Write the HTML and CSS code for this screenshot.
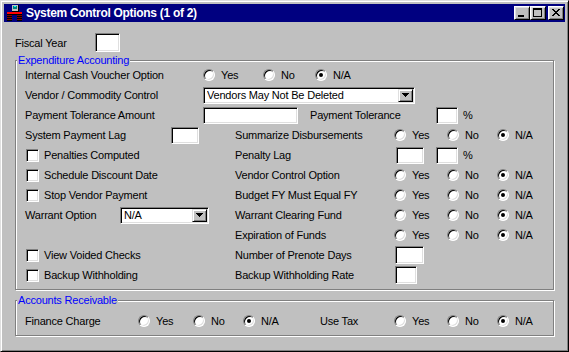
FILE: index.html
```html
<!DOCTYPE html>
<html>
<head>
<meta charset="utf-8">
<link rel="stylesheet" href="styles.css">
</head>
<body>
<div class="window">
  <div class="titlebar">
    <svg class="app-icon" width="16" height="16" viewBox="0 0 16 16">
      <rect x="6" y="0" width="7" height="7" fill="#000"/>
      <rect x="6" y="0" width="6" height="6" fill="#c0c0c0"/>
      <rect x="7" y="1" width="4" height="3" fill="#008080"/>
      <rect x="8" y="1" width="2" height="1" fill="#00ffff"/>
      <rect x="1" y="7" width="15" height="2" fill="#ff0000"/>
      <rect x="1" y="9" width="15" height="1" fill="#000"/>
      <rect x="1" y="10" width="5" height="6" fill="#800000"/>
      <rect x="1" y="11" width="5" height="1" fill="#000"/>
      <rect x="1" y="13" width="5" height="1" fill="#000"/>
      <rect x="1" y="15" width="5" height="1" fill="#000"/>
      <rect x="11" y="10" width="5" height="6" fill="#800000"/>
      <rect x="11" y="11" width="5" height="1" fill="#000"/>
      <rect x="11" y="13" width="5" height="1" fill="#000"/>
      <rect x="11" y="15" width="5" height="1" fill="#000"/>
    </svg>
    <span class="title">System Control Options (1 of 2)</span>
    <div class="tb-buttons">
      <span class="tb-btn"><svg width="14" height="12" viewBox="0 0 14 12"><rect x="3" y="8" width="6" height="2" fill="#000"/></svg></span>
      <span class="tb-btn"><svg width="14" height="12" viewBox="0 0 14 12"><path d="M2 1h9v2h-9z M2 1h1v9h-1z M10 1h1v9h-1z M2 9h9v1h-9z" fill="#000"/></svg></span>
      <span class="tb-btn close"><svg width="14" height="12" viewBox="0 0 14 12"><path d="M3 2h2v1h-2z M9 2h2v1h-2z M4 3h2v1h-2z M8 3h2v1h-2z M5 4h4v1h-4z M6 5h2v1h-2z M5 6h4v1h-4z M4 7h2v1h-2z M8 7h2v1h-2z M3 8h2v1h-2z M9 8h2v1h-2z" fill="#000"/></svg></span>
    </div>
  </div>

  <div class="content">
    <div class="row fiscal">
      <span class="lbl w80">Fiscal Year</span>
      <span class="field fy"></span>
    </div>

    <div class="group g1">
      <div class="gtitle">Expenditure Accounting</div>

      <div class="row">
        <span class="lbl w178">Internal Cash Voucher Option</span>
        <span class="opt w60"><span class="radio"></span>Yes</span>
        <span class="opt w52"><span class="radio"></span>No</span>
        <span class="opt"><span class="radio on"></span>N/A</span>
      </div>

      <div class="row">
        <span class="lbl w178">Vendor / Commodity Control</span>
        <span class="select vendor"><span class="sel-text">Vendors May Not Be Deleted</span><span class="dd-btn"><svg width="7" height="4" viewBox="0 0 7 4"><path d="M0 0h7v1h-1v1h-1v1h-1v1h-1v-1h-1v-1h-1v-1h-1z" fill="#000"/></svg></span></span>
      </div>

      <div class="row">
        <span class="lbl w178">Payment Tolerance Amount</span>
        <span class="field amount"></span>
        <span class="lbl tol">Payment Tolerance</span>
        <span class="field pct"></span>
        <span class="pctsign">%</span>
      </div>

      <div class="row">
        <div class="left">
          <span class="lbl w146">System Payment Lag</span>
          <span class="field lag"></span>
        </div>
        <span class="lbl w159">Summarize Disbursements</span>
        <span class="opt w53"><span class="radio"></span>Yes</span>
        <span class="opt w50"><span class="radio"></span>No</span>
        <span class="opt"><span class="radio on"></span>N/A</span>
      </div>

      <div class="row">
        <div class="left">
          <span class="cb"></span><span class="cb-lbl">Penalties Computed</span>
        </div>
        <span class="lbl w159">Penalty Lag</span>
        <span class="field plag"></span>
        <span class="field pct2"></span>
        <span class="pctsign">%</span>
      </div>

      <div class="row">
        <div class="left">
          <span class="cb"></span><span class="cb-lbl">Schedule Discount Date</span>
        </div>
        <span class="lbl w159">Vendor Control Option</span>
        <span class="opt w53"><span class="radio"></span>Yes</span>
        <span class="opt w50"><span class="radio"></span>No</span>
        <span class="opt"><span class="radio on"></span>N/A</span>
      </div>

      <div class="row">
        <div class="left">
          <span class="cb"></span><span class="cb-lbl">Stop Vendor Payment</span>
        </div>
        <span class="lbl w159">Budget FY Must Equal FY</span>
        <span class="opt w53"><span class="radio"></span>Yes</span>
        <span class="opt w50"><span class="radio"></span>No</span>
        <span class="opt"><span class="radio on"></span>N/A</span>
      </div>

      <div class="row">
        <div class="left">
          <span class="lbl w95">Warrant Option</span>
          <span class="select warrant"><span class="sel-text">N/A</span><span class="dd-btn"><svg width="7" height="4" viewBox="0 0 7 4"><path d="M0 0h7v1h-1v1h-1v1h-1v1h-1v-1h-1v-1h-1v-1h-1z" fill="#000"/></svg></span></span>
        </div>
        <span class="lbl w159">Warrant Clearing Fund</span>
        <span class="opt w53"><span class="radio"></span>Yes</span>
        <span class="opt w50"><span class="radio"></span>No</span>
        <span class="opt"><span class="radio on"></span>N/A</span>
      </div>

      <div class="row">
        <div class="left"></div>
        <span class="lbl w159">Expiration of Funds</span>
        <span class="opt w53"><span class="radio"></span>Yes</span>
        <span class="opt w50"><span class="radio"></span>No</span>
        <span class="opt"><span class="radio on"></span>N/A</span>
      </div>

      <div class="row">
        <div class="left">
          <span class="cb"></span><span class="cb-lbl">View Voided Checks</span>
        </div>
        <span class="lbl w159">Number of Prenote Days</span>
        <span class="field days"></span>
      </div>

      <div class="row">
        <div class="left">
          <span class="cb"></span><span class="cb-lbl">Backup Withholding</span>
        </div>
        <span class="lbl w159">Backup Withholding Rate</span>
        <span class="field rate"></span>
      </div>
    </div>

    <div class="group g2">
      <div class="gtitle">Accounts Receivable</div>
      <div class="row">
        <span class="lbl w113">Finance Charge</span>
        <span class="opt w55"><span class="radio"></span>Yes</span>
        <span class="opt w50"><span class="radio"></span>No</span>
        <span class="opt w77"><span class="radio on"></span>N/A</span>
        <span class="lbl w74">Use Tax</span>
        <span class="opt w53"><span class="radio"></span>Yes</span>
        <span class="opt w50"><span class="radio"></span>No</span>
        <span class="opt"><span class="radio on"></span>N/A</span>
      </div>
    </div>
  </div>
</div>
</body>
</html>
```

FILE: styles.css
```css
* { box-sizing: border-box; }

body {
  margin: 0;
  font-family: "Liberation Sans", Arial, sans-serif;
  font-size: 11px;
  letter-spacing: -0.2px;
  color: #000;
  background: #c0c0c0;
}

.window {
  width: 569px;
  height: 352px;
  background: #c0c0c0;
  border: 1px solid;
  border-color: #dfdfdf #000 #000 #dfdfdf;
  box-shadow: inset 1px 1px 0 #fff, inset -1px -1px 0 #808080;
  padding: 3px;
}

.titlebar {
  height: 18px;
  background: #000080;
  color: #fff;
  display: flex;
  align-items: center;
  padding: 0 1px 0 2px;
}

.app-icon { flex: none; margin-right: 4px; }

.title {
  flex: 1;
  font-weight: bold;
  font-size: 12px;
  letter-spacing: -0.3px;
  white-space: nowrap;
}

.tb-buttons { display: flex; }

.tb-btn {
  width: 16px;
  height: 14px;
  background: #c0c0c0;
  border: 1px solid;
  border-color: #fff #000 #000 #fff;
  box-shadow: inset 1px 1px 0 #dfdfdf, inset -1px -1px 0 #808080;
  display: flex;
}
.tb-btn svg { display: block; }
.tb-btn.close { margin-left: 2px; }

.content { padding: 11px 0 0 11px; }

.row {
  display: flex;
  align-items: center;
  height: 20px;
  white-space: nowrap;
}

.fiscal { height: 19px; margin-bottom: 8px; }

.lbl { flex: none; }
.w80 { width: 80px; }
.w74 { width: 74px; }
.w95 { width: 95px; }
.w113 { width: 113px; }
.w146 { width: 146px; }
.w159 { width: 159px; }
.w178 { width: 178px; }

.field {
  display: block;
  flex: none;
  height: 17px;
  background: #fff;
  border: 1px solid;
  border-color: #808080 #fff #fff #808080;
  box-shadow: inset 1px 1px 0 #000, inset -1px -1px 0 #dfdfdf;
}
.fy { width: 25px; height: 19px; }
.amount { width: 95px; }
.tol { margin-left: 12px; width: 126px; }
.pct { width: 22px; }
.pctsign { margin-left: 5px; }
.lag { width: 28px; }
.plag { width: 28px; margin-left: 2px; }
.pct2 { width: 22px; margin-left: 12px; }
.days { width: 29px; height: 18px; margin-left: 1px; }
.rate { width: 22px; height: 18px; margin-left: 1px; }

.group {
  width: 539px;
  border: 1px solid #808080;
  box-shadow: inset 1px 1px 0 #fff, 1px 1px 0 #fff;
  padding: 0 0 4px 9px;
}

.gtitle {
  width: max-content;
  height: 13px;
  line-height: 13px;
  color: #0000ff;
  background: #c0c0c0;
  padding: 0 1px;
  margin: -7px 0 -2px -8px;
  white-space: nowrap;
}

.g2 { margin-top: 10px; }
.g2 .gtitle { margin-bottom: 4px; }

.left {
  width: 210px;
  flex: none;
  display: flex;
  align-items: center;
}

.opt {
  display: flex;
  align-items: center;
  gap: 6px;
  flex: none;
}
.w50 { width: 50px; }
.w52 { width: 52px; }
.w53 { width: 53px; }
.w55 { width: 55px; }
.w60 { width: 60px; }
.w77 { width: 77px; }

.radio {
  position: relative;
  flex: none;
  width: 12px;
  height: 12px;
  border-radius: 50%;
  background: #fff;
  border: 1px solid;
  border-color: #808080 #fff #fff #808080;
  box-shadow: inset 1px 1px 0 #000, inset -1px -1px 0 #dfdfdf;
}
.radio.on::after {
  content: "";
  position: absolute;
  left: 3px;
  top: 3px;
  width: 4px;
  height: 4px;
  border-radius: 50%;
  background: #000;
}

.cb {
  flex: none;
  width: 13px;
  height: 13px;
  margin-left: 1px;
  background: #fff;
  border: 1px solid;
  border-color: #808080 #fff #fff #808080;
  box-shadow: inset 1px 1px 0 #000, inset -1px -1px 0 #dfdfdf;
}
.cb-lbl { margin-left: 5px; }

.select {
  display: flex;
  align-items: center;
  flex: none;
  height: 17px;
  padding: 1px 1px 1px 3px;
  background: #fff;
  border: 1px solid;
  border-color: #808080 #fff #fff #808080;
  box-shadow: inset 1px 1px 0 #000, inset -1px -1px 0 #dfdfdf;
}
.vendor { width: 212px; }
.warrant { width: 89px; }
.sel-text { flex: 1; overflow: hidden; }

.dd-btn {
  flex: none;
  width: 15px;
  height: 13px;
  background: #c0c0c0;
  border: 1px solid;
  border-color: #dfdfdf #000 #000 #dfdfdf;
  box-shadow: inset 1px 1px 0 #fff, inset -1px -1px 0 #808080;
  display: flex;
  align-items: center;
  justify-content: center;
}
.dd-btn svg { display: block; }
```
